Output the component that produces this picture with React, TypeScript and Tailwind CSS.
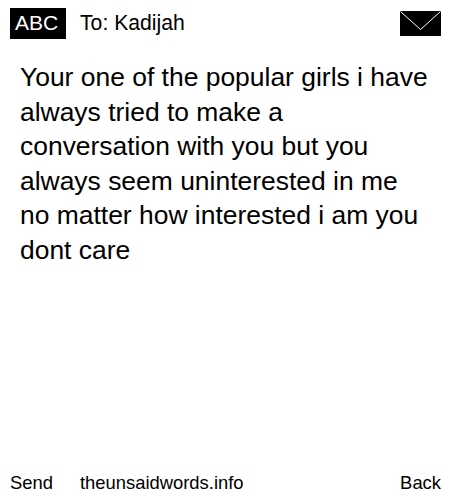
const lines = [
  "Your one of the popular girls i have",
  "always tried to make a",
  "conversation with you but you",
  "always seem uninterested in me",
  "no matter how interested i am you",
  "dont care",
];

export default function App() {
  return (
    <div className="w-[450px] h-[500px] bg-white text-black flex flex-col font-['Liberation_Sans',Arial,sans-serif]">
      <div className="flex items-center h-[46px] pl-[10px] pr-[9px]">
        <div className="bg-black text-white text-[21px] h-[31px] w-[56px] pl-[5px] flex items-center">ABC</div>
        <div className="ml-[14px] text-[21.2px]">To: Kadijah</div>
        <svg className="ml-auto" width="41" height="25" viewBox="0 0 41 25">
          <rect width="41" height="25" fill="#000" />
          <path d="M0.5 0.5 L20.5 18.5 L40.5 0.5" stroke="#fff" strokeWidth="1" fill="none" />
        </svg>
      </div>
      <div className="flex-1 px-5 pt-[14px] text-[26.45px] leading-[34.5px]">
        {lines.map((line) => (
          <div key={line} className="whitespace-nowrap">{line}</div>
        ))}
      </div>
      <div className="flex items-center justify-between h-[34px] pl-[10px] pr-[9px] text-[18.4px]">
        <div className="flex">
          <span>Send</span>
          <span className="ml-[27px]">theunsaidwords.info</span>
        </div>
        <span>Back</span>
      </div>
    </div>
  );
}
